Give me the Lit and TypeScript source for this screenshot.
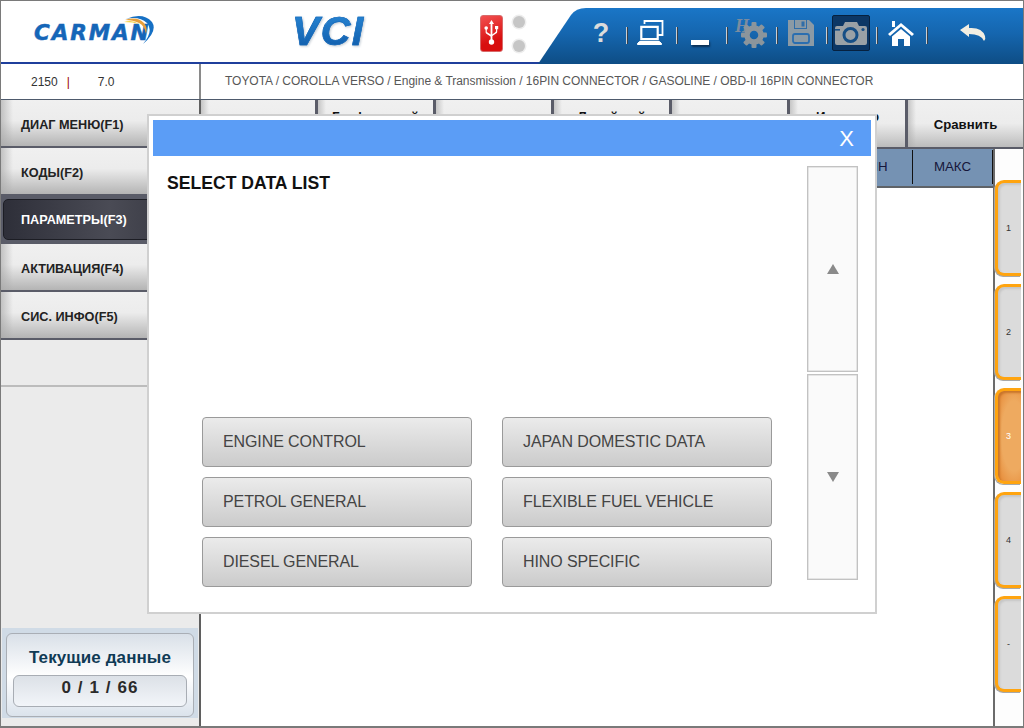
import { LitElement, html, css, svg } from "lit";
import { customElement } from "lit/decorators.js";

const gearTeeth = [0, 45, 90, 135, 180, 225, 270, 315].map(
  (a) => svg`<rect x="10.5" y="0" width="5" height="6" rx="1" fill="#8b959c" transform="rotate(${a} 13 13)"></rect>`
);

@customElement("app-root")
export class AppRoot extends LitElement {
  static styles = css`
    :host { display: block; width: 1024px; height: 728px; font-family: "Liberation Sans", Arial, sans-serif; }
    * { box-sizing: border-box; }
    .app { position: relative; width: 1024px; height: 728px; border: 1px solid #7a7a7a; border-width: 1px 1px 2px 1px; background: #fff; display: flex; flex-direction: column; overflow: hidden; }

    .top { height: 63px; flex: none; display: flex; position: relative; border-bottom: 2px solid #1f3f9c; }
    .logo { width: 199px; flex: none; position: relative; padding: 21px 0 0 33px; }
    .carman { font: italic bold 21.5px/22px "DejaVu Sans", sans-serif; color: #1566b8; letter-spacing: 1.9px; -webkit-text-stroke: .5px #1566b8; display: block; white-space: nowrap; }
    .swoosh { position: absolute; left: 120px; top: 12px; }
    .vci-wrap { width: 92px; margin-left: 92px; padding-top: 7px; flex: none; }
    .vci { font: italic bold 41px/46px "Liberation Sans", sans-serif; letter-spacing: 1.4px; background: linear-gradient(180deg, #2a8ad8, #0e58a6); -webkit-background-clip: text; background-clip: text; color: transparent; -webkit-text-stroke: .6px #1a6cbc; filter: drop-shadow(1px 1px 1px #c5cdd5); }
    .usb { margin-left: 96px; margin-top: 14px; flex: none; width: 23px; height: 37px; border-radius: 3px; background: linear-gradient(160deg, #f25050, #d80f0f 70%); border: 1px solid #d86a6a; display: flex; align-items: center; justify-content: center; }
    .lights { margin-left: 10px; margin-top: 15px; flex: none; display: flex; flex-direction: column; gap: 12px; }
    .light { width: 12px; height: 12px; border-radius: 50%; background: #c6c6c6; box-shadow: 0 0 0 1.5px #eee; }
    .bar { position: absolute; top: 7px; left: 537px; right: 0; height: 56px; background: linear-gradient(180deg, #1a76c7 0%, #1566af 45%, #0e4d85 100%); clip-path: path("M0 56 L33 7 Q38 0 48 0 L486 0 L486 56 Z"); display: flex; padding: 0 0 0 39px; align-items: flex-start; }
    .cell { width: 50px; height: 56px; flex: none; display: flex; align-items: center; justify-content: center; position: relative; padding-bottom: 6px; }
    .cell::after { content: ""; position: absolute; right: -1px; top: 19px; height: 17px; width: 2px; background: linear-gradient(90deg, #c9ced3 50%, #39414b 50%); }
    .cell.last::after { display: none; }
    .cell.back { width: 96px; }
    .q { font: bold 27px/30px "Liberation Sans", sans-serif; color: #dcdcdc; margin-right: 2px; }
    .cell svg { display: block; }
    .nudge { margin-right: 3px; }
    .minus { width: 18px; height: 5px; background: #fff; margin-top: 19px; box-shadow: 1px 2px 2px #0b2f55; margin-right: 4px; }
    .gear { position: relative; width: 36px; height: 34px; margin-left: -4px; }
    .gear svg { position: absolute; left: 9px; top: 6px; }
    .gear span { position: absolute; left: 3px; top: 0; font: italic bold 18px/20px "Liberation Serif", serif; color: #7a8ca0; }
    .cam { position: relative; }
    .cam .box { width: 38px; height: 36px; background: #0c3765; border: 1px solid #06213f; border-radius: 2px; display: flex; align-items: center; justify-content: center; margin-right: 3px; }
    .backicon { margin-right: 4px; }

    .info { height: 36px; flex: none; display: flex; color: #333; font-size: 12px; border-bottom: 1px solid #4e5a6c; }
    .info-l { width: 200px; flex: none; border-right: 2px solid #8a8a8a; display: flex; align-items: center; padding-left: 30px; }
    .sep-red { margin-left: 9px; color: #900; width: 31px; }
    .info-r { flex: 1; display: flex; align-items: center; padding: 0 0 1px 24px; color: #575757; letter-spacing: -.03px; }

    .body { flex: 1; display: flex; min-height: 0; }
    .left { width: 200px; flex: none; background: #ebebeb; border-right: 2px solid #5f5f5f; display: flex; flex-direction: column; }
    .btn { height: 48px; flex: none; background: linear-gradient(90deg, rgba(170,170,170,.65), rgba(170,170,170,0) 12px), linear-gradient(180deg, #f0f0f0 0%, #ececec 45%, #b4b4b4 100%); color: #222; font-weight: bold; font-size: 12.7px; display: flex; align-items: center; padding: 3px 0 0 20px; border-bottom: 2px solid #5a5c68; }
    .btn.active { background: #5a5c68; padding: 2px; }
    .btn.active span { flex: 1; height: 41px; border-radius: 5px; border: 1px solid #1c1d24; background: linear-gradient(90deg, #2e2f39, #4a4b55 55%, #33343d); color: #fff; display: flex; align-items: center; padding: 2px 0 0 17px; }
    .fill { height: 47px; flex: none; border-bottom: 2px solid #bcbcbc; }
    .counter-wrap { margin: auto 1px 8px 1px; height: 90px; background: #d0dbe6; padding: 5px 4px 1px 4px; }
    .counter { height: 84px; border: 1px solid #a9aeb5; border-radius: 6px; background: linear-gradient(180deg, #d9e0e8 0%, #fff 52%, #dbe3ec 100%); padding: 0 6px; display: flex; flex-direction: column; }
    .counter h3 { margin: 0; height: 41px; font: bold 17px/48px "Liberation Sans", sans-serif; text-align: center; color: #0f3a55; letter-spacing: .1px; white-space: nowrap; }
    .counter div { height: 32px; border: 1px solid #a8adb4; border-radius: 6px; background: linear-gradient(180deg, #dce1e7, #f2f5f9); text-align: center; font: bold 17px/24px "Liberation Sans", sans-serif; color: #2a2a2a; letter-spacing: 1.1px; }

    .right { flex: 1; min-width: 0; display: flex; flex-direction: column; }
    .tabs { display: flex; height: 49px; flex: none; }
    .tab { width: 118px; flex: none; background: linear-gradient(90deg, rgba(170,170,170,.6), rgba(170,170,170,0) 8px), linear-gradient(180deg, #f0f0f0 0%, #ececec 50%, #bcbcbc 100%); border-right: 3px solid #5a5c68; border-bottom: 2px solid #5a5c68; font: bold 13.2px/15px "Liberation Sans", sans-serif; color: #111; display: flex; align-items: center; justify-content: center; padding-top: 2px; }
    .tab:first-child { width: 117px; }
    .tab:last-child { flex: 1; border-right: none; }
    .tab.high { align-items: flex-start; padding: 9px 0 0; }
    .under { flex: 1; display: flex; min-height: 0; }
    .main { width: 792px; flex: none; background: #fff; }
    .thead { height: 39px; background: #7592b3; border-bottom: 2px solid #5f6368; display: flex; justify-content: flex-end; padding: 1px 0 2px; color: #16163a; font-size: 13.3px; }
    .th { width: 80px; border-right: 1px solid #111; display: flex; align-items: center; justify-content: center; padding-bottom: 2px; }
    .side { flex: 1; border-left: 2px solid #6b6b6b; background: #fdfdfd; padding: 31px 2px 0 0; display: flex; flex-direction: column; gap: 8px; }
    .pg { height: 96px; flex: none; border: 3px solid #ffa40f; border-right: none; border-radius: 9px 0 0 9px; background: #dbdbdb; box-shadow: inset 2px 2px 2px #c6c6c6, -1px 1px 0 #a8a8a8; font-size: 9px; color: #333; display: flex; align-items: center; justify-content: center; padding-right: 2px; }
    .pg.on { background: radial-gradient(ellipse at 70% 50%, #eeaa60 55%, #e58632 100%); box-shadow: inset 2px 2px 2px #c9762c, -1px 1px 0 #a8a8a8; color: #fff; }

    .modal { position: absolute; left: 146px; top: 113px; width: 730px; height: 500px; background: #fff; border: 2px solid #d0d0d0; padding: 4px; display: flex; flex-direction: column; }
    .mhead { height: 36px; flex: none; width: 718px; background: #5b9df6; color: #fff; font-size: 22px; line-height: 37px; text-align: right; padding-right: 17px; }
    .mbody { flex: 1; display: flex; min-height: 0; }
    .mleft { width: 654px; flex: none; display: flex; flex-direction: column; padding: 18px 0 21px 14px; }
    .mleft h2 { margin: 0; font: bold 17.6px/18px "Liberation Sans", sans-serif; color: #111; white-space: nowrap; }
    .grid { margin-top: auto; margin-left: 35px; display: grid; grid-template-columns: 270px 270px; gap: 10px 30px; }
    .opt { height: 50px; border: 1px solid #9a9a9a; border-radius: 4px; background: linear-gradient(180deg, #ebebeb, #cbcbcb); color: #444; font-size: 16px; letter-spacing: -.1px; display: flex; align-items: center; padding-left: 20px; }
    .scroll { width: 51px; flex: none; padding-top: 10px; display: flex; flex-direction: column; gap: 2px; }
    .arrow { height: 206px; flex: none; background: #fafafa; border: 1px solid #c2c2c2; box-shadow: inset 0 0 0 .5px #d0d0d0; display: flex; align-items: center; justify-content: center; }
  `;

  render() {
    return html`
      <div class="app">
        <div class="top">
          <div class="logo">
            <span class="carman">CARMAN</span>
            <svg class="swoosh" width="36" height="34" viewBox="0 0 36 34">
              <path d="M5 6 Q22 -1 31 9 Q37 18 22 31 Q33 18 26 10 Q18 3 5 6Z" fill="#1670c4"></path>
              <path d="M4 7 Q16 3 23 10 Q27 15 25 21 Q24 13 18 10 Q12 7 4 7Z" fill="#e8a03a"></path>
              <path d="M3 9 Q11 6 18 11 Q12 9 3 9Z" fill="#f4d34a"></path>
            </svg>
          </div>
          <div class="vci-wrap"><span class="vci">VCI</span></div>
          <div class="usb">
            <svg width="15" height="27" viewBox="0 0 15 27" fill="#fff">
              <path d="M7.5 0 L10 4 H8.4 V20 H6.6 V4 H5Z"></path>
              <circle cx="7.5" cy="22" r="2.7"></circle>
              <rect x="11" y="6" width="3.2" height="3.2"></rect>
              <path d="M12 9 H13.2 V12 Q13.2 13 12 13.6 L7.5 16.5 V15 L11 12.4 Q12 12 12 11Z"></path>
              <circle cx="2.2" cy="8" r="1.8"></circle>
              <path d="M1.6 9 H2.8 V12 L7.5 15 V17 L2.4 13.8 Q1.6 13.2 1.6 12Z"></path>
            </svg>
          </div>
          <div class="lights"><div class="light"></div><div class="light"></div></div>
          <div class="bar">
            <div class="cell"><span class="q">?</span></div>
            <div class="cell">
              <svg class="nudge" width="29" height="26" viewBox="0 0 28 26" fill="none" stroke="#fff" stroke-width="1.8">
                <path d="M8 4 V1 H26 V15 H21"></path>
                <path d="M4.8 6.8 H21.2 V19.2 H4.8Z" stroke-width="2.2"></path>
                <path d="M1 23.5 L3 21.5 H23 L25 23.5 V24.5 H1Z" fill="#fff" stroke-width="1"></path>
              </svg>
            </div>
            <div class="cell"><div class="minus"></div></div>
            <div class="cell">
              <div class="gear">
                <span>H</span>
                <svg width="26" height="26" viewBox="0 0 26 26">
                  ${gearTeeth}
                  <circle cx="13" cy="13" r="7" fill="none" stroke="#8b959c" stroke-width="5.5"></circle>
                </svg>
              </div>
            </div>
            <div class="cell">
              <svg class="nudge" width="26" height="26" viewBox="0 0 26 26">
                <path d="M0 0 H21 L26 5 V26 H0Z" fill="#8b9aa5"></path>
                <rect x="6" y="0" width="13" height="9" fill="#2f6da8"></rect>
                <rect x="7" y="0" width="11" height="8" fill="#8b9aa5"></rect>
                <rect x="13.5" y="1.5" width="3" height="5" fill="#2f6da8"></rect>
                <rect x="5" y="14" width="16" height="9" rx="2" fill="#8b9aa5" stroke="#2a6eb0" stroke-width="1.8"></rect>
              </svg>
            </div>
            <div class="cell cam">
              <div class="box">
                <svg width="32" height="23" viewBox="0 0 32 23">
                  <path d="M0 6 Q0 4 2 4 H8 L10 0 H22 L24 4 H30 Q32 4 32 6 V21 Q32 23 30 23 H2 Q0 23 0 21Z" fill="#9aa1a6"></path>
                  <circle cx="15.5" cy="13" r="6.5" fill="none" stroke="#174f86" stroke-width="3"></circle>
                  <circle cx="28" cy="7.5" r="1.6" fill="#174f86"></circle>
                  <rect x="0" y="7" width="5" height="1.6" fill="#174f86"></rect>
                </svg>
              </div>
            </div>
            <div class="cell">
              <svg class="nudge" width="28" height="26" viewBox="0 0 28 26" fill="#fff">
                <path d="M14 3 L1 14 L3 16 L14 6.5 L25 16 L27 14Z"></path>
                <rect x="5" y="1" width="3" height="6"></rect>
                <path d="M5 16.5 L14 9 L23 16.5 V26 H17 V19 H11 V26 H5Z"></path>
              </svg>
            </div>
            <div class="cell back last">
              <svg class="backicon" width="26" height="18" viewBox="0 0 26 18">
                <path d="M0 6 L9 0 V4 Q22 3 25 12 Q26 15 24 17 Q21 10 9 10 V13Z" fill="#f2eee2"></path>
              </svg>
            </div>
          </div>
        </div>

        <div class="info">
          <div class="info-l"><span>2150</span><span class="sep-red">|</span><span>7.0</span></div>
          <div class="info-r">TOYOTA / COROLLA VERSO / Engine &amp; Transmission / 16PIN CONNECTOR / GASOLINE / OBD-II 16PIN CONNECTOR</div>
        </div>

        <div class="body">
          <div class="left">
            <div class="btn">ДИАГ МЕНЮ(F1)</div>
            <div class="btn">КОДЫ(F2)</div>
            <div class="btn active"><span>ПАРАМЕТРЫ(F3)</span></div>
            <div class="btn">АКТИВАЦИЯ(F4)</div>
            <div class="btn">СИС. ИНФО(F5)</div>
            <div class="fill"></div>
            <div class="counter-wrap">
              <div class="counter">
                <h3>Текущие данные</h3>
                <div>0 / 1 / 66</div>
              </div>
            </div>
          </div>
          <div class="right">
            <div class="tabs">
              <div class="tab"></div>
              <div class="tab high">Графический</div>
              <div class="tab"></div>
              <div class="tab high">Линейный</div>
              <div class="tab"></div>
              <div class="tab high">Инвертор</div>
              <div class="tab">Сравнить</div>
            </div>
            <div class="under">
              <div class="main">
                <div class="thead"><div class="th">МИН</div><div class="th">МАКС</div></div>
              </div>
              <div class="side">
                <div class="pg">1</div>
                <div class="pg">2</div>
                <div class="pg on">3</div>
                <div class="pg">4</div>
                <div class="pg">-</div>
              </div>
            </div>
          </div>
        </div>

        <div class="modal">
          <div class="mhead">X</div>
          <div class="mbody">
            <div class="mleft">
              <h2>SELECT DATA LIST</h2>
              <div class="grid">
                <div class="opt">ENGINE CONTROL</div>
                <div class="opt">JAPAN DOMESTIC DATA</div>
                <div class="opt">PETROL GENERAL</div>
                <div class="opt">FLEXIBLE FUEL VEHICLE</div>
                <div class="opt">DIESEL GENERAL</div>
                <div class="opt">HINO SPECIFIC</div>
              </div>
            </div>
            <div class="scroll">
              <div class="arrow"><svg width="12" height="10" viewBox="0 0 12 10"><path d="M6 0 L12 10 H0Z" fill="#8a8a8a"></path></svg></div>
              <div class="arrow"><svg width="12" height="10" viewBox="0 0 12 10"><path d="M0 0 H12 L6 10Z" fill="#8a8a8a"></path></svg></div>
            </div>
          </div>
        </div>
      </div>
    `;
  }
}
